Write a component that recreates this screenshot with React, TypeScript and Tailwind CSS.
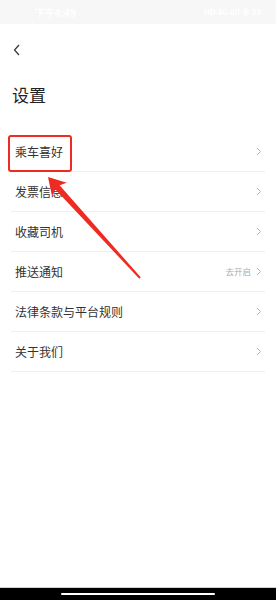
const rows = [
  { label: '乘车喜好' },
  { label: '发票信息' },
  { label: '收藏司机' },
  { label: '推送通知', extra: '去开启' },
  { label: '法律条款与平台规则' },
  { label: '关于我们' },
];

const Chevron = () => (
  <svg width="6" height="9" viewBox="0 0 6 9" fill="none" className="shrink-0">
    <polyline points="1,1 4.5,4.5 1,8" stroke="#b5b5b5" strokeWidth="1" />
  </svg>
);

export default function App() {
  return (
    <div
      className="relative w-[276px] h-[600px] bg-white flex flex-col overflow-hidden"
      style={{ fontFamily: '"Noto Sans CJK SC", "Noto Sans", sans-serif' }}
    >
      {/* Status bar */}
      <div className="h-[24px] bg-[#f7f7f7] flex items-center justify-between px-[35px] text-[10px] font-bold text-white">
        <span>下午4:49</span>
        <span className="text-[8px] mr-[-20px]">HD 4G ull 令 53</span>
      </div>

      {/* Nav */}
      <div className="h-[52px] flex items-center px-[13px]">
        <svg width="8" height="12" viewBox="0 0 8 12" fill="none">
          <polyline points="6,1 1.5,6 6,11" stroke="#333" strokeWidth="1.2" />
        </svg>
      </div>

      {/* Title */}
      <h1 className="h-[38px] leading-[38px] px-[12px] text-[17px] text-[#222]">设置</h1>

      {/* List */}
      <div className="mt-[18px] px-[11px]">
        {rows.map((row) => (
          <div
            key={row.label}
            className="h-[40px] flex items-center justify-between pl-[4px] pr-[3px] border-b border-[#eeeeee]"
          >
            <span className="text-[12px] text-[#333]">{row.label}</span>
            <div className="flex items-center gap-[5px]">
              {row.extra && <span className="text-[8.5px] text-[#aaa]">{row.extra}</span>}
              <Chevron />
            </div>
          </div>
        ))}
      </div>

      <div className="flex-1" />

      {/* Bottom bar */}
      <div className="h-[13px] bg-black border-t border-[#cfcfcf] flex items-center justify-center">
        <div className="w-[154px] h-[2px] bg-white rounded-full" />
      </div>

      {/* Annotation box */}
      <div className="absolute left-[8px] top-[135px] w-[64px] h-[37px] border-2 border-[#ee2a22] rounded-[3px]" />

      {/* Annotation arrow */}
      <svg className="absolute left-0 top-0 pointer-events-none" width="276" height="600" viewBox="0 0 276 600">
        <polygon
          points="48,177 66.8,182.8 59.6,185.3 140.7,277.3 139.3,278.7 55.2,189.3 52,196.2"
          fill="#ee2a22"
        />
      </svg>
    </div>
  );
}
